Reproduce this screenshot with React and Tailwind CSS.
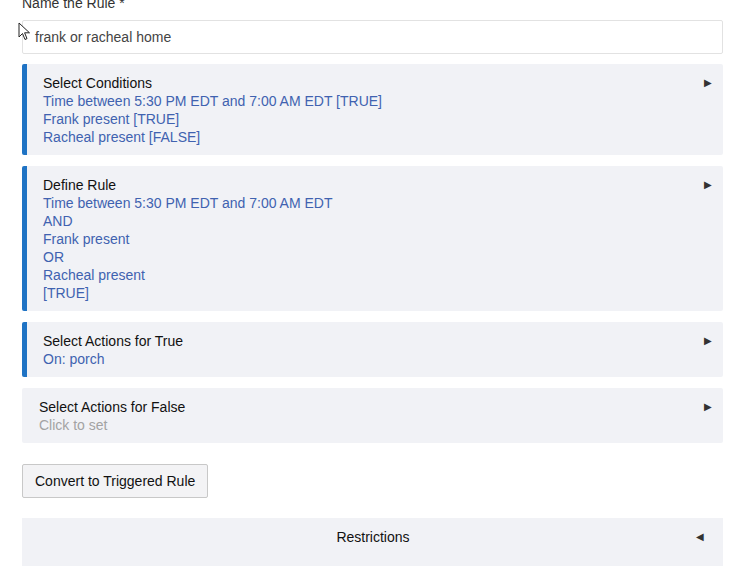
export default function App() {
  const Card = ({ title, lines, accent = true, muted = false }) => (
    <div
      className={`flex items-start bg-[#f1f2f6] rounded-[2px] pt-[10px] pb-[9px] pr-[11px] ${
        accent ? 'border-l-[5px] border-[#1f73c4] pl-[16px]' : 'pl-[17px]'
      }`}
    >
      <div className="flex-1 flex flex-col">
        <div className="text-[14px] leading-[18px] text-[#111]">{title}</div>
        {lines.map((l, i) => (
          <div
            key={i}
            className={`text-[14px] leading-[18px] ${muted ? 'text-[#a3a3a3]' : 'text-[#4062b0]'}`}
          >
            {l}
          </div>
        ))}
      </div>
      <span className="text-[10px] leading-[18px] text-[#333]">▶</span>
    </div>
  );

  return (
    <div
      className="relative w-[748px] h-[576px] overflow-hidden bg-white"
      style={{ fontFamily: '"Liberation Sans", Arial, sans-serif' }}
    >
      <div className="flex flex-col pl-[22px] pr-[25px] mt-[-6px]">
        <div className="text-[14px] leading-[18px] text-[#333]">Name the Rule *</div>
        <div className="mt-[8px] h-[34px] border border-[#e2e2e2] rounded-[2px] flex items-center pl-[12px] text-[14px] text-[#444]">
          frank or racheal home
        </div>

        <div className="mt-[10px] flex flex-col gap-[11px]">
          <Card
            title="Select Conditions"
            lines={[
              'Time between 5:30 PM EDT and 7:00 AM EDT [TRUE]',
              'Frank present [TRUE]',
              'Racheal present [FALSE]',
            ]}
          />
          <Card
            title="Define Rule"
            lines={[
              'Time between 5:30 PM EDT and 7:00 AM EDT',
              'AND',
              'Frank present',
              'OR',
              'Racheal present',
              '[TRUE]',
            ]}
          />
          <Card title="Select Actions for True" lines={['On: porch']} />
          <Card title="Select Actions for False" lines={['Click to set']} accent={false} muted />
        </div>

        <div className="mt-[21px]">
          <button className="h-[34px] px-[12px] bg-[#f3f3f5] border border-[#c8c8c8] rounded-[2px] text-[14px] text-[#111]">
            Convert to Triggered Rule
          </button>
        </div>

        <div className="mt-[20px] h-[48px] bg-[#f1f2f6] flex items-start pt-[10px] pr-[19px]">
          <div className="flex-1 text-center text-[14px] leading-[18px] text-[#111] pl-[28px]">
            Restrictions
          </div>
          <span className="text-[10px] leading-[18px] text-[#333]">◀</span>
        </div>
      </div>

      <svg
        className="absolute left-[18px] top-[22px]"
        width="14"
        height="20"
        viewBox="0 0 14 20"
      >
        <path
          d="M1 1 L1 15 L4.5 11.5 L7 17.5 L9 16.6 L6.6 10.8 L11.5 10.8 Z"
          fill="white"
          stroke="#222"
          strokeWidth="1"
          strokeLinejoin="round"
        />
      </svg>
    </div>
  );
}
